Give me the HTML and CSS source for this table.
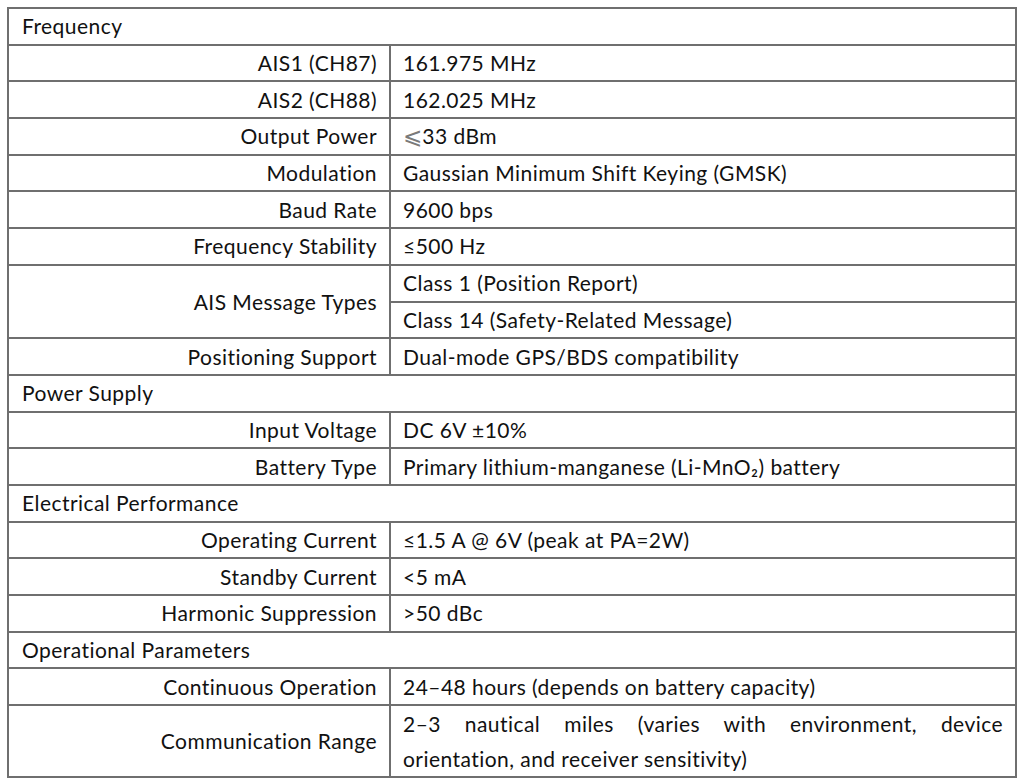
FILE: index.html
```html
<!DOCTYPE html>
<html lang="en">
<head>
<meta charset="utf-8">
<title>AIS Specifications</title>
<link rel="stylesheet" href="styles.css">
</head>
<body>
<div class="page">
<table class="spec">
  <colgroup><col class="c-label"><col class="c-value"></colgroup>
  <tbody>
    <tr class="sec"><td colspan="2">Frequency</td></tr>
    <tr><th>AIS1 (CH87)</th><td>161.975 MHz</td></tr>
    <tr><th>AIS2 (CH88)</th><td>162.025 MHz</td></tr>
    <tr><th>Output Power</th><td><span class="le">⩽</span>33 dBm</td></tr>
    <tr><th>Modulation</th><td>Gaussian Minimum Shift Keying (GMSK)</td></tr>
    <tr><th>Baud Rate</th><td>9600 bps</td></tr>
    <tr><th>Frequency Stability</th><td>≤500 Hz</td></tr>
    <tr><th rowspan="2">AIS Message Types</th><td>Class 1 (Position Report)</td></tr>
    <tr><td>Class 14 (Safety-Related Message)</td></tr>
    <tr><th>Positioning Support</th><td>Dual-mode GPS/BDS compatibility</td></tr>
    <tr class="sec"><td colspan="2">Power Supply</td></tr>
    <tr><th>Input Voltage</th><td>DC 6V ±10%</td></tr>
    <tr><th>Battery Type</th><td>Primary lithium-manganese (Li-MnO₂) battery</td></tr>
    <tr class="sec"><td colspan="2">Electrical Performance</td></tr>
    <tr><th>Operating Current</th><td>≤1.5 A @ 6V (peak at PA=2W)</td></tr>
    <tr><th>Standby Current</th><td>&lt;5 mA</td></tr>
    <tr><th>Harmonic Suppression</th><td>&gt;50 dBc</td></tr>
    <tr class="sec"><td colspan="2">Operational Parameters</td></tr>
    <tr><th>Continuous Operation</th><td>24–48 hours (depends on battery capacity)</td></tr>
    <tr class="tall"><th>Communication Range</th><td class="just">2–3 nautical miles (varies with environment, device orientation, and receiver sensitivity)</td></tr>
  </tbody>
</table>
</div>
</body>
</html>
```

FILE: styles.css
```css
html, body {
  margin: 0;
  padding: 0;
  background: #ffffff;
}
.page {
  width: 1024px;
  height: 784px;
  box-sizing: border-box;
  padding: 7px 0 0 7px;
}
.spec {
  border-collapse: collapse;
  width: 1010px;
  table-layout: fixed;
  font-family: Lato, "Liberation Sans", sans-serif;
  font-size: 21px;
  letter-spacing: 0.45px;
  color: #111111;
}
.c-label { width: 382px; }
.spec th, .spec td {
  border: 2px solid #6f6f6f;
  height: 36.7px;
  padding: 0 12px;
  box-sizing: border-box;
  font-weight: normal;
  vertical-align: middle;
  line-height: 24px;
}
.spec th { text-align: right; }
.spec td { text-align: left; }
.spec .sec td { padding-left: 13px; }
.spec .tall th, .spec .tall td { height: 71px; }
.spec td.just {
  text-align: justify;
  line-height: 35px;
}
.le {
  font-family: "DejaVu Sans", sans-serif;
  font-size: 1.1em;
  color: #7a7a7a;
  letter-spacing: 0;
}
```
